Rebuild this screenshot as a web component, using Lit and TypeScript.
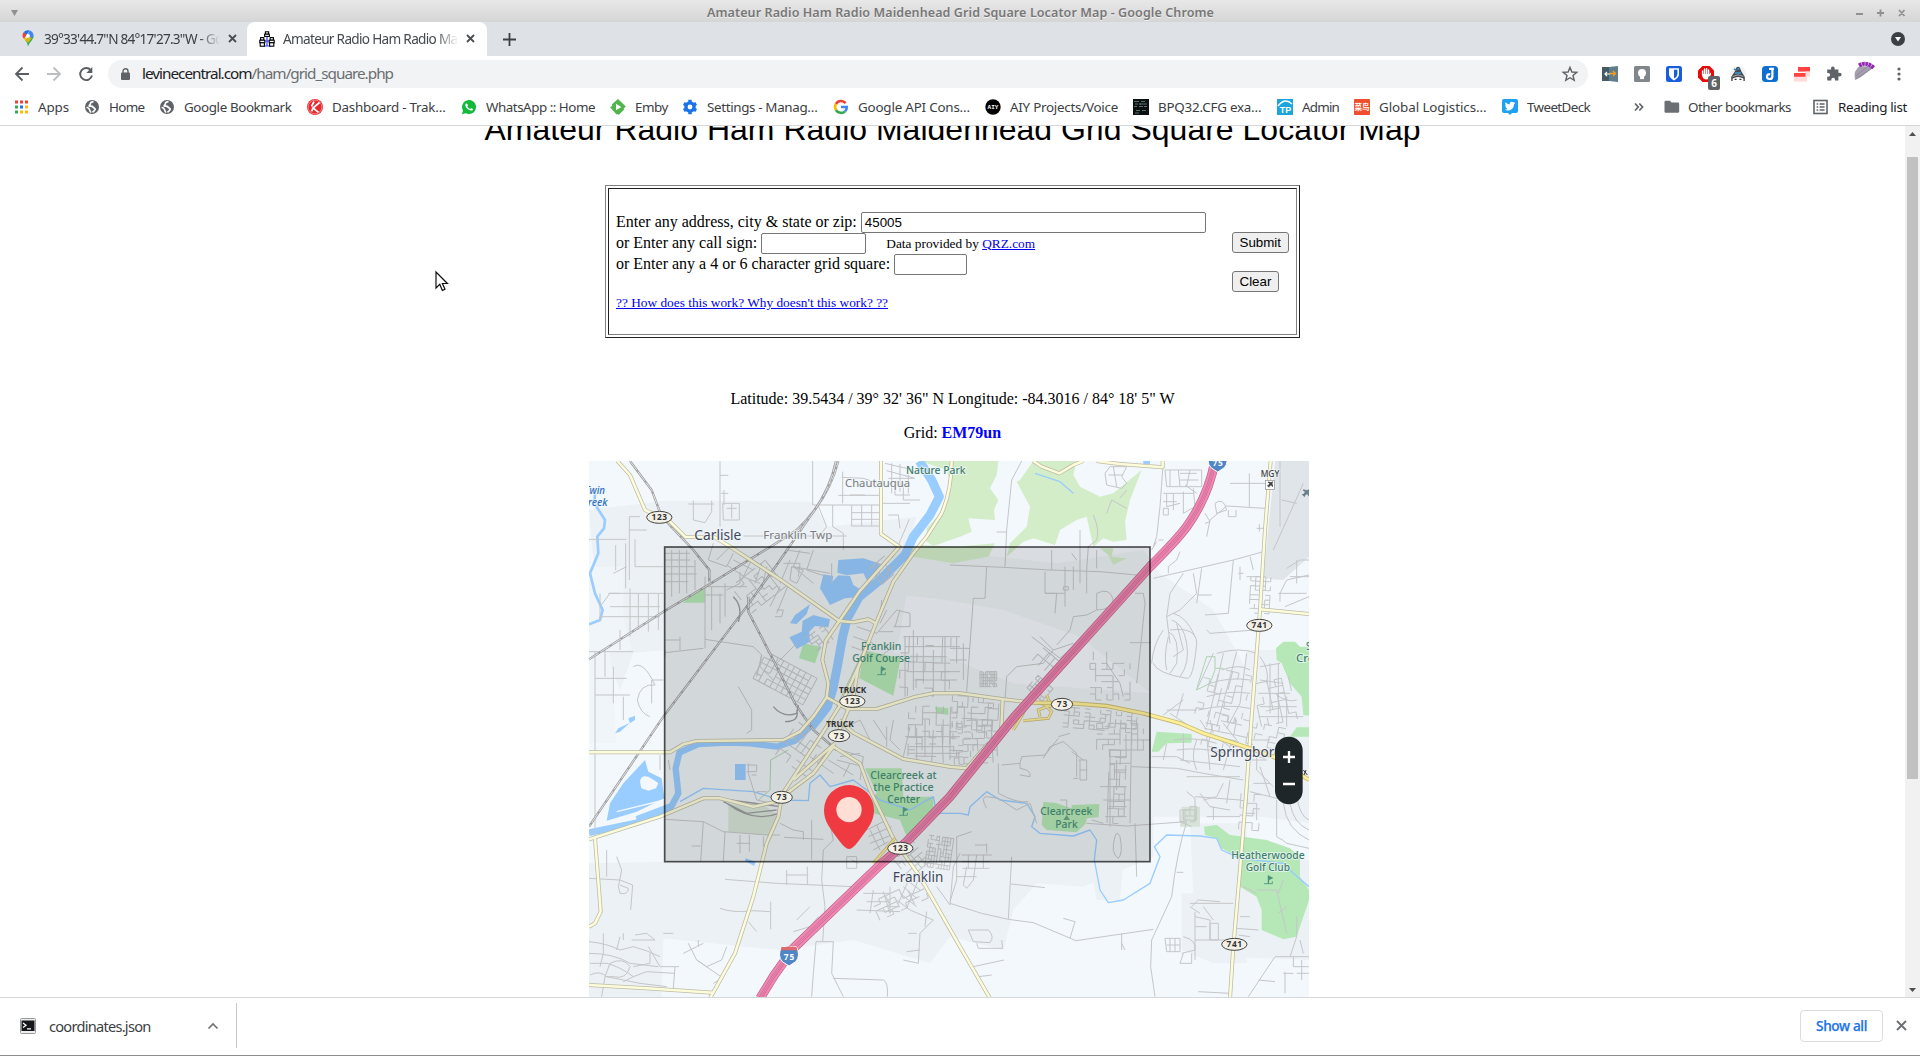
import { LitElement, html, svg, css } from "lit";
import { customElement, property } from "lit/decorators.js";

/** Single-line label that spaces its letters to fill an exact width. */
@customElement("fit-text")
class FitText extends LitElement {
  @property({ type: Number }) w = 0;
  static styles = css`
    :host { display: inline-block; white-space: pre; flex: none; }
    .t { display: inline-block; white-space: pre; }
  `;
  render() { return html`<span class="t"><slot></slot></span>`; }
  firstUpdated() {
    const t = this.renderRoot.querySelector(".t") as HTMLElement;
    const n = (this.textContent || "").length;
    if (this.w && n) {
      const natural = t.getBoundingClientRect().width;
      t.style.letterSpacing = (this.w - natural) / n + "px";
      this.style.width = this.w + "px";
    }
  }
}

const globe = svg`<circle cx="8" cy="8" r="7" fill="#5f6368"/><path d="M9.5 2.6C8 2.8 6.2 3.4 6.4 4.6C6.8 5.8 5 5.6 5.2 7C6.4 7.4 8.4 6.8 9 8C9.6 9.2 11.4 8.8 11.2 10.4C10.6 11.4 9.6 12.6 8.4 13.2M2.6 8.2C4 8.6 5.4 9.4 5.6 10.8C5.8 12 6.6 12.6 6.8 13.6" fill="none" stroke="#fff" stroke-width="1.7"/>`;

const icons: Record<string, unknown> = {
  apps: svg`${[0, 1, 2].map(r => [0, 1, 2].map(c => svg`<rect x=${2 + c * 5} y=${1.5 + r * 5} width="3" height="3" fill=${[["#ea4335", "#ea4335", "#ea4335"], ["#34a853", "#1a73e8", "#fbbc04"], ["#34a853", "#fbbc04", "#fbbc04"]][r][c]}/>`))}`,
  globe,
  dash: svg`<circle cx="8" cy="8" r="8" fill="#e8272c"/><circle cx="8" cy="8" r="6.9" fill="none" stroke="#fff" stroke-width=".6" opacity=".7"/><path d="M7 2.5L4.5 7.5M12.5 3.5L6 9L11.5 13.4M6 9L4.6 12.4" fill="none" stroke="#fff" stroke-width="1.7"/>`,
  wa: svg`<path d="M1 15.2L2 11.6A7 7 0 1 1 4.7 14.2Z" fill="#12b93b"/><path d="M5.2 4.6C6.2 3.8 6.6 5.6 7 6.3C6.8 7 6 7.2 6.5 7.8C7.2 9 8 9.6 9.1 10C9.7 9.6 9.9 8.9 10.5 9.2C12.2 10 12.4 10.2 11.5 11.2C9.5 12.6 4.3 9.2 4.3 6Q4.4 5.1 5.2 4.6Z" fill="#fff"/>`,
  emby: svg`<path d="M8 0L15.8 7.6L13.6 9.8L14.2 10.6L8.6 16L7.6 15L6.6 15.4L.2 8.6L2.4 6.4L1.8 5.6Z" fill="#52b54b"/><path d="M6 4.8L11.3 8L6 11.2Z" fill="#fff"/>`,
  gear: svg`<circle cx="8" cy="8" r="4.1" fill="none" stroke="#1a73e8" stroke-width="3.4"/><path d="M8 .8V3.5M8 12.5V15.2M1.8 4.4L4.1 5.7M11.9 10.3L14.2 11.6M1.8 11.6L4.1 10.3M11.9 5.7L14.2 4.4" stroke="#1a73e8" stroke-width="3.4"/>`,
  google: svg`<path d="M12.6 4.1A6 6 0 0 0 2.9 5" fill="none" stroke="#ea4335" stroke-width="2.6"/><path d="M2.9 5A6 6 0 0 0 2.9 11" fill="none" stroke="#fbbc05" stroke-width="2.6"/><path d="M2.9 11A6 6 0 0 0 12 12.4" fill="none" stroke="#34a853" stroke-width="2.6"/><path d="M12 12.4A6 6 0 0 0 13.8 8H8" fill="none" stroke="#4285f4" stroke-width="2.6"/>`,
  aiy: svg`<circle cx="8" cy="8" r="7.7" fill="#000"/><text x="8" y="10.2" font-size="6" font-weight="700" fill="#fff" text-anchor="middle" font-family="Liberation Mono, monospace">AIY</text>`,
  bpq: svg`<rect width="16" height="16" fill="#0b0f12"/><path d="M1 2.5H6M8 2.5H12M2 5H5M7 5H14M1 7.5H4M6 7.5H10M3 11.5H7M9 11.5H13M2 14H6" stroke="#5c7f6a" stroke-width=".9"/><path d="M6 5H8M11 7.5H14" stroke="#7176a8" stroke-width=".9"/>`,
  tp: svg`<rect width="16" height="16" fill="#1ba5dc"/><path d="M1 7Q8 -2 15 5" stroke="#fff" stroke-width="1.5" fill="none"/><text x="8.4" y="14" font-size="9" font-weight="700" fill="#fff" text-anchor="middle" font-family="Liberation Sans, sans-serif">TP</text>`,
  cn: svg`<rect width="16" height="16" rx="1" fill="#f04f2d"/><text x="8" y="11" font-size="7.5" font-weight="700" fill="#fff" text-anchor="middle" font-family="Noto Sans CJK SC, sans-serif">菜鸟</text>`,
  tweet: svg`<path d="M2 0H14Q16 0 16 2V12Q16 14 14 14H10L8 16L6 14H2Q0 14 0 12V2Q0 0 2 0Z" fill="#1da1f2"/><path d="M13.2 4L12 5.2C12 9 9.2 11.5 5.8 11.5Q4 11.5 2.8 10.6Q4.6 10.7 5.6 9.7Q4 9.4 3.7 8.2H4.5Q3 7.4 3.1 5.7L4 6Q2.7 4.8 3.5 3.2Q5.2 5.3 7.7 5.4Q7.4 2.7 9.9 2.7L11.3 3.3L12.8 2.9L12.2 3.9Z" fill="#fff"/>`,
  folder: svg`<path d="M.5 3Q.5 1.8 1.7 1.8H6L7.6 3.6H14Q15.2 3.6 15.2 4.8V12.6Q15.2 13.8 14 13.8H1.7Q.5 13.8 .5 12.6Z" fill="#6b6f73"/>`,
  list: svg`<rect x="1" y="1.5" width="13" height="13" fill="none" stroke="#5f6368" stroke-width="1.6"/><path d="M3.6 5H5.2M3.6 8H5.2M3.6 11H5.2M6.6 5H11.6M6.6 8H11.6M6.6 11H11.6" stroke="#5f6368" stroke-width="1.4"/>`,
};
const icon = (k: string) => html`<svg class="ic" width="16" height="16" viewBox="0 0 16 16">${icons[k]}</svg>`;

/* icon, label, label width, gap before the next entry's icon */
const bookmarks: [string, string, number, number][] = [
  ["apps", "Apps", 31, 15], ["globe", "Home", 35.5, 14.5], ["globe", "Google Bookmark", 107.5, 15.5],
  ["dash", "Dashboard - Trak…", 113.5, 15.5], ["wa", "WhatsApp :: Home", 109, 15], ["emby", "Emby", 33, 14],
  ["gear", "Settings - Manag…", 110.5, 15.5], ["google", "Google API Cons…", 112, 15], ["aiy", "AIY Projects/Voice", 108, 15],
  ["bpq", "BPQ32.CFG exa…", 103.5, 15.5], ["tp", "Admin", 37, 15], ["cn", "Global Logistics…", 107.5, 15.5], ["tweet", "TweetDeck", 63, 0],
];

const extensions = [
  svg`<rect y="1" width="9" height="14" fill="#455a64"/><path d="M7 1L16 0V16L7 15Z" fill="#607d8b"/><path d="M8 8H3M5 6L3 8L5 10" stroke="#fff" stroke-width="1.2" fill="none"/><path d="M8 7.5H13M11 5L13.5 7.5L11 10" stroke="#ff9a1a" stroke-width="1.4" fill="none"/>`,
  svg`<rect width="16" height="16" rx="1.5" fill="#80868b"/><circle cx="8" cy="7" r="4" fill="#fff"/><rect x="6" y="9.5" width="4" height="3.6" fill="#fff"/>`,
  svg`<rect width="16" height="16" rx="2.5" fill="#175ddc"/><path d="M3 2.2H13V8Q13 12 8 14.4Q3 12 3 8Z" fill="#fff"/><path d="M8 3.8H11.4V8Q11.3 10.8 8 12.6Z" fill="#175ddc"/>`,
  svg`<path d="M4.5 0H11.5L16 4.5V11.5L11.5 16H4.5L0 11.5V4.5Z" fill="#e60b0b"/><path d="M4.6 8.5V5M6.6 8V3M8.6 8V2.8M10.6 8V4" stroke="#fff" stroke-width="1.5" stroke-linecap="round"/><path d="M4 8H11.4L12.8 6.6L13 8Q11.5 13.5 8 13.5Q4 13 4 8Z" fill="#fff"/>`,
  svg`<circle cx="8" cy="8" r="8" fill="#f1f1f1"/><path d="M6.4 1.6Q8 0 9.8 1.6L11.4 5.6L14.8 11V15H1.2V11L4.8 5.6Z" fill="#43494f"/><path d="M4 3L6.5 4.4M5 7H11M7.4 2.4L9.4 3.4" stroke="#4187b5" stroke-width="1.8"/><path d="M2.6 12.4Q8 9.4 13.4 12.4V16H2.6Z" fill="#fff"/><path d="M4.6 13.4H6.6M9.4 13.4H11.4" stroke="#333" stroke-width="1.2"/><path d="M2.6 10.4Q8 7.4 13.4 10.4" stroke="#aaa" fill="none"/>`,
  svg`<rect width="16" height="16" rx="3.5" fill="#0f6fd0"/><path d="M7 2.8H12M10.4 3V10.2Q10.4 13 7.6 13Q4.8 12.8 5 10Q5.4 7.8 8.2 8.4" stroke="#fff" stroke-width="2.2" fill="none"/>`,
  svg`<rect x="4" y="1" width="12" height="4.6" fill="#ff4343"/><rect y="10.4" width="13" height="5.2" fill="#ffdada"/><rect x="11" y="5.6" width="5" height="5" fill="#ffdada"/><rect y="7" width="11.5" height="3.8" fill="#ff4343"/>`,
  svg`<path d="M2 3.5H5.2Q4.6 .4 6.8 .4Q9 .4 8.6 3.5H12.4V7Q15.6 6.4 15.6 8.6Q15.6 11 12.4 10.3V14.6H9Q9.3 11.8 7.2 11.8Q5 11.8 5.4 14.6H1.2V10.6Q4.2 11 4.2 8.8Q4.2 6.6 1.2 7V3.5Z" fill="#5f6368"/>`,
];

/* ---------- map ---------- */
/* Regular block of local streets, thinned with a repeatable sequence. */
function streets(x: number, y: number, w: number, h: number, deg: number, nx: number, ny: number, keep = 0.7) {
  let s = Math.floor(x * 31 + y * 17 + w) | 0;
  const rnd = () => { s = (s * 1103515245 + 12345) & 0x7fffffff; return (s >> 8) / 0x7fffff; };
  let d = "";
  for (let i = 0; i <= nx; i++) for (let j = 0; j < ny; j++)
    if (rnd() < keep) d += `M${(x + (w * i) / nx).toFixed(0)} ${(y + (h * j) / ny).toFixed(0)}v${(h / ny).toFixed(0)}`;
  for (let j = 0; j <= ny; j++) for (let i = 0; i < nx; i++)
    if (rnd() < keep) d += `M${(x + (w * i) / nx).toFixed(0)} ${(y + (h * j) / ny).toFixed(0)}h${(w / nx).toFixed(0)}`;
  return svg`<path d=${d} transform="rotate(${deg} ${x + w / 2} ${y + h / 2})"/>`;
}

const localNW = [
  "M420 33V230M420 76H445M788 65V160M775 136H905M340 152V210L375 218L395 185V152M325 162H402M428 160H478V210H430ZM440 175H470M455 160V205M432 120V165M423 130H445M785 82L850 85L890 98M915 40L1000 60M920 62L1005 85M925 85H1000M935 40V130M960 42V125M985 50V130",
  "M698 33V165H905M715 168L740 230L720 255M758 165V230L790 250V300M815 165V228H905M815 188H905M815 208H905M845 165V228M875 165V228M490 258H800M970 150H1020M970 100V150M988 208L940 320L900 345M925 195H955L960 235",
  "M27 268H140M180 200H148V390M148 240H200M165 268V350H250M100 370L140 350M107 285V360M137 280V415M85 430H120M60 470L90 430H250M60 515V430M90 470H240M150 415V560M175 430V540M205 430V545M235 430V540M60 500H240M27 605H160M45 605V1172M120 540V600M45 685H140M100 650V760M75 600V680M45 735H150M160 650Q190 630 225 705Q180 700 172 750Q180 790 210 800M250 690H215V760M130 740V810",
  "M255 310H330M255 330H330M258 350H345M255 372H350M255 395H325M275 300V440M298 300V430M320 300V430M345 330V420M375 380V595M375 410H500M375 435H430M395 410V540M420 430V520M435 400V500M255 608L370 595M255 570H300M300 600V560M255 600V620M375 568L520 590L545 615L540 650L580 690",
  "M400 280L385 330L440 350L460 310M440 345L500 385L540 400M460 330L520 360M410 330L450 290M520 320L485 390M545 340L525 400M560 350L545 420M600 410L570 470M625 405L590 490M480 365V400L440 420M590 480H610L605 500H585M630 330L600 400M660 300L640 350L700 400M620 300L690 310M700 300L680 360L740 380M640 350L750 370M755 340V400M610 340H660L655 380M635 350L670 360L650 400L630 390Z",
  "M475 710L515 780V840L500 850M545 615L530 680M590 640L650 580M900 620L940 590M830 530L890 550M820 560L880 580M815 590L870 610M905 450L900 500M920 480L900 520M890 550L950 480L990 490V530H940M960 480L945 530M895 545H940M970 560H1140M975 590H1140M975 560V740M1000 540V720M1030 560V700M1060 600V740M1095 560V730M990 620H1100M980 665H1140M1000 690H1130",
];
const localNE = [
  "M215 33L185 90L170 240L165 350M140 246H170M110 350L105 445H70L50 725M0 345L160 352L300 360L450 365L560 375L602 345M305 300V360M285 365V430L320 430L315 490M345 350V470M370 350V420M390 240V400M430 195Q450 240 440 270L415 290L410 360V430M440 300V355M285 430H345M340 410H355V420H340ZM365 310L380 330M60 595H0M20 560V640M0 630H50M40 580V690M440 430Q480 410 490 450Q480 480 440 480ZM440 480L410 495L370 500L360 540L320 585M245 560L330 625L380 580M270 560L310 600L370 580M310 600L280 640L200 650L170 680L165 750M430 605V630M470 605V640L510 700L520 740M555 430H580L585 460L575 560L560 700",
  "M465 70L480 50H530L515 80L530 100L515 115L470 105ZM475 75H520M490 50L500 110M530 175L485 150L470 190M530 120L510 145M640 33L630 170L620 260L610 290M645 60H755V110H650ZM660 60V110M685 60L690 110M720 60L710 108M640 130H730M650 130V170L690 160M670 130V180M700 125V190M730 115L735 170L700 190M640 175H655V195H640ZM640 155H680M690 70H740M690 90H745M705 105L740 130",
  "M840 100H950M898 70V170M945 175L830 168L780 210L770 260M765 190L780 215L765 220M795 160Q820 140 830 180L800 190ZM835 180V200H858V180M920 235H940M928 222V245M940 305L850 330L610 385M850 330L835 490L765 495M755 355L740 460M700 370L660 430L650 500L660 580M730 370L740 430L690 480L650 500M740 435H785M660 540Q740 530 740 580Q730 690 710 685Q620 670 610 640M665 510Q700 520 710 580Q720 640 690 680M655 545Q690 560 680 640L660 670M655 560Q640 620 650 660M680 520L700 600L670 620M670 490Q710 500 735 560M640 540Q610 580 605 640M690 305L680 330L655 350V370M625 270H640M620 275L605 300M540 578H602M780 550L770 540M780 550L915 540",
  "M870 350V390M900 320L910 360M865 370H880M890 380H930M985 430H1070M990 455V430L1010 390L1077 375M1005 470L1077 440M1010 355L1050 330H1077M1020 380H1077M1040 330V400M790 610L740 720M800 610Q870 590 920 610M815 660Q870 640 900 660M780 700Q840 680 900 690M770 740Q840 720 900 730M745 780Q830 760 900 775M820 610L800 700L770 830M860 605L830 720L800 830M890 610L870 760L830 835M930 620Q960 660 950 700M930 650L990 640M930 690L1000 700M925 730L1020 730M960 640V790M985 640V820M700 730L680 800M650 780H740M640 795L700 750M660 790L720 830M930 770H1040M925 800H1060M1010 740V830M975 730Q1010 760 1040 750",
  "M970 300L1060 100M990 33V230M995 150L1040 160",
];
const localSW = [
  "M27 475L120 480L158 495L152 570M80 390V470M110 410L125 450L115 500L120 520Q145 525 145 505L120 495M240 105V150M265 120L270 150M255 298L370 305L430 335L560 345L600 345M370 305L362 425M435 335L430 425M480 345V400M508 345V395M335 378H362M470 370H510M550 350V380M435 478L590 490L820 500M620 450V495M620 465H685M682 440V495M420 565Q460 580 520 572L570 575M572 545V628M505 605L530 635M600 310L640 330L670 335V360M612 352L730 358M695 300V420M730 390L725 480L735 560L728 665H708L700 760L695 830M728 665H760L755 760L790 830M760 775L910 780Q925 785 922 830M640 635L690 620L715 590M650 600L690 560",
  "M27 665Q80 670 120 690L160 680Q200 690 240 710M27 700Q100 700 150 730L235 740M30 730L80 730Q120 740 160 770L200 755L285 760M70 640V700L60 740M120 650L110 690M130 660V640M155 660H225L200 640L165 645M205 680L240 740M75 770L90 730Q130 710 150 740Q140 780 100 770ZM30 765Q60 750 80 770L180 790L260 800M75 770L65 830M210 700V730L160 740M240 740H297M285 740L280 805M130 785L160 770M325 670L350 720L430 775M310 700L350 680L370 670M440 680L425 720L380 740L350 720M425 775L400 790M250 640H280M355 660V680",
  "M505 130V160L530 240M500 135H530V155H500M515 165H530M530 215H560M530 240L575 250",
  "M770 120L850 140M780 90L850 110L840 180M745 120L820 165M880 0L920 60M920 20V80M940 0L930 60L960 90M990 20L970 110M1010 25V120M1035 0V110M1060 30L1055 125M1085 20L1090 128M1110 30V120M975 50H1140M985 80H1120M985 100H1140M800 20L840 0L870 60M780 110L840 100M690 110L760 160M810 130L790 170",
  "M730 390L760 360L750 310M860 330L920 300M865 350L935 320M870 370L935 345M880 390L925 365M870 330L900 390M890 315L915 375M800 410H830V445H800ZM815 420L835 430M920 560H960M880 510L870 580M850 520H930M860 545H930M930 500V580M830 570L960 575M910 515L930 580M990 570L1060 600L1020 640L1015 730L970 720M1040 575L1035 620M1010 640H985M1020 690L980 695M1110 555L1120 440L1140 400M1070 500L1110 555M960 520L1010 560M970 500L1010 535M980 480L1020 510M950 540L990 570M990 470L955 550M1015 480L980 565",
];
const localSE = [
  "M145 130V220Q200 250 235 245M155 135L210 130L215 110L285 105L325 55M210 130V145Q245 150 240 170L210 165M280 115L300 80L340 65L380 100V170M385 120H410V180H390V120M390 150H410M365 95L400 120M370 175H385M325 50L360 40M480 90V320M480 110H530M480 130H540M490 150H530M500 120V210M450 200H530M460 240H540M465 290H530M475 260H530M545 0L540 310M520 60H600M555 310L560 470M410 310L530 318L710 305M495 350Q480 400 505 415Q520 400 510 350Q500 330 495 350M350 300V240H330M425 300L460 310",
  "M110 265Q90 230 110 230L145 235L200 270L240 250L260 310M0 550L95 580L175 598L250 608L378 662L610 628M175 598L185 410M183 492L285 503M20 350V480L0 545M20 350L65 335M35 405H125M35 425H120M38 445H118M55 405V445M80 405L70 480L50 505L40 495L50 440M100 405V445M20 470H80M75 375H110M110 370V400M340 595L375 605L360 655M515 640V690M515 670L525 690M55 630H115Q135 650 120 668L70 665ZM80 670L85 685H158L155 660M70 740L162 720M85 770L125 765",
  "M710 305Q680 400 665 530L605 660L602 740L615 830M680 457H700M545 140L680 145L760 160L880 180M605 110H680L720 130M640 120L650 70M700 40V120M740 60Q720 110 740 150M770 50L780 150M810 60L840 80L820 150M670 60Q740 50 800 70M680 90Q750 80 830 100M690 120L870 140M710 170H870M710 215L735 235V300M735 230L870 240M750 220L780 260L840 270M760 240L800 230L820 190M770 290H870M790 260V300M840 180L830 250M880 250H920V300M880 280H915M720 260H740V300H700V270H720ZM690 305L725 320",
  "M720 550H850M725 560L745 540L810 545M735 575V720M735 590L780 600V660M760 560L790 600M735 620H770M780 610H805V660H780ZM700 650Q740 660 735 690L695 700M645 655H690V695H650ZM660 655V695M675 655V695M650 675H690M700 700L690 730H725V700M870 590H900M860 625L925 630M865 645L900 650M735 660H850M745 815L840 820M720 560L750 580",
  "M920 510H980L1010 640M880 500L920 520M985 520L1000 480M985 580L1010 560M1040 590V650L1020 710M895 830L975 710H1077M925 780L975 785M1005 755V820M1030 710V740H1077M1055 720V780M1040 760H1077M1050 660L1060 700M1000 760H1030M980 240V350Q1000 360 1010 370L1077 385M1000 250Q1010 330 1077 360M1020 250Q1030 310 1077 330M1040 230Q1050 290 1077 300M920 110V150L970 200M930 140L960 230M900 60H960M905 120H950M910 190H960M860 0L850 50M820 10L860 60M780 0L790 40M750 0L770 30M900 215L1000 240",
];

const place = (x: number, y: number, list: string[]) => svg`<g transform="translate(${x} ${y})">${list.map(d => svg`<path d=${d}/>`)}</g>`;

const roads = [
  "M112 33L150 75L195 180L270 215L315 260L405 262L450 290L600 388L778 513",
  "M903 33V252L958 290L838 425L778 513L737 572L727 630L745 700L740 742L803 777",
  "M1115 33Q1115 120 1085 190L1040 260L1000 310L940 395L888 520L840 640L790 750L740 830L605 1035",
  "M778 513L820 517L865 508L888 520",
  "M835 650L820 740L800 790L765 870",
  "M740 742L700 800L660 845L610 870L350 873L310 883L270 907H27",
  "M803 777H890L1000 742L1060 730H1140L1270 748L1360 758",
  "M777 810L820 848L970 927L1110 950L1160 955L1220 885L1263 860L1268 748",
  "M760 890L700 970L605 1042M765 880L640 990",
  "M760 890L840 940L870 1020L940 1165L960 1195L1020 1280L1140 1490L1230 1645",
  "M27 1168L240 1100L370 1045H420L520 1070L605 1052",
  "M45 1165L62 1385L45 1420L27 1430",
  "M27 1605L200 1615L400 1628",
  "M605 1042L595 1100L560 1180L520 1340L465 1510L390 1645",
  "M2072 33L2055 240L2040 480L2015 800L2000 1010L1980 1260L1960 1490L1950 1645",
  "M2040 478L2187 492",
  "M1360 33L1385 50L1438 70L1480 45L1510 33M1550 33L1620 42L1748 52V33",
];
const ramps = "M1415 690L1350 735L1330 790L1300 840M1415 770L1360 755M1330 812L1405 805L1415 785L1400 770L1375 780L1380 800M1400 735L1410 760M945 1165L880 1240";
const route73 = "M1360 758L1480 760L1580 768L1690 790L1800 820L1870 850L2000 892L2080 920L2187 990";
const interstate = "M1905 33Q1885 140 1820 230Q1790 270 1710 350L1620 450L1410 682L1300 805L1110 1040L980 1175L900 1245L640 1495L580 1580L540 1645";
const rails = [
  "M27 628L250 485L385 405L580 285L650 240Q745 150 775 33",
  "M768 33Q750 120 690 200L590 345L500 470L250 800L27 1130",
  "M150 33L215 120L245 200L340 300L388 360V395",
  "M505 440V485L580 630L645 760L700 840L770 900",
];
const thinRails = "M460 440Q490 470 475 515M580 770Q610 805 650 790L655 765M615 815Q660 815 650 780M430 1055L500 1090L590 1080M440 1060Q520 1120 595 1090M450 1050L600 1070";

const greens = [
  "M1020 33L1255 33L1250 75L1230 115L1255 150L1242 180L1245 210L1165 205L1175 245L1140 260L1060 288L1040 275V235L1090 180L1115 110L1100 60Z",
  "M1320 90L1360 33L1490 33L1480 75L1500 110L1560 140L1600 130L1685 60L1650 150L1635 215L1640 270L1600 275L1570 265L1540 290L1520 200L1490 210L1440 240L1425 285L1360 265L1330 275L1280 320L1290 280L1340 230L1350 170L1310 95Z",
  "M1025 285L1130 290L1245 280L1225 320L1170 330L1120 340L1000 320L970 350L1000 290Z",
  "M1560 295H1600L1595 320L1640 325L1600 345L1585 315Z",
];
const parks = [
  "M850 600L962 625L940 737L838 685Z", "M375 410V458H308L340 430Z", "M670 580L722 590L705 640L657 625Z", "M1065 770L1105 775V795L1070 790Z",
  "M855 955H965L970 1040H1060V1080L980 1160L960 1110L880 1090L870 1050L890 1030Z",
  "M1390 1055L1430 1060L1475 1075V1065L1558 1062L1556 1102L1520 1105L1518 1120L1490 1147L1400 1140L1385 1125Z",
  "M1872 1130L1910 1125L1950 1155L2060 1170L2130 1195L2160 1220V1280L2187 1320V1350L2170 1400L2150 1460L2110 1468L2045 1440V1380L2030 1340L1980 1310L1980 1225L1925 1195L1910 1165L1875 1155Z",
  "M2187 797L2170 795L2165 740L2130 700L2105 640L2090 630L2088 595L2110 575H2145L2160 590H2187Z",
  "M1730 845L1835 852V878L1760 880L1735 905H1715Z", "M2187 832H2150L2130 860H2187Z",
];
const ponds = [
  "M775 330L850 325L912 345L890 380L860 390L850 370L800 376L772 368Z", "M730 373L760 378L757 395L775 376L810 378L820 405L845 420L830 442L795 445L750 465L720 415Z",
  "M630 520L645 495L690 463L680 492L650 522Z", "M668 512L700 495L750 508L745 532L705 528L688 545L690 575L650 597L628 562L665 545Z",
  "M80 1112L90 1060L130 1000L195 930L205 965L245 985L253 1045L170 1085Z", "M465 942H497V990H465Z", "M497 1225L527 1235L522 1248L495 1232Z",
  "M145 805L165 797V810L150 820ZM105 850L115 835L150 818L120 845Z", "M1690 33H1710V42H1690Z",
];
const creek = "M300 1055L370 1015L520 1025L600 1050L685 1052L690 1000L720 975L750 1010L820 990L900 1050L990 1080L1060 1040L1070 1090L1140 1090L1165 1095L1170 1070L1220 1025L1260 1050L1340 1060L1365 1100L1355 1130L1380 1150L1480 1158L1530 1140L1550 1170L1543 1230L1560 1320L1585 1358L1630 1350L1710 1300L1740 1220L1723 1190L1760 1155L1860 1158L1910 1165L1925 1200L1980 1225L2110 1240L2140 1270L2187 1310M1365 70L1440 95L1480 130";

function shield(x: number, y: number, t: string) {
  const rx = t.length > 2 ? 38 : 32;
  return svg`<ellipse cx=${x} cy=${y} rx=${rx} ry="18" class="sh"/><text x=${x} y=${y + 9} class="num" text-anchor="middle" textLength=${t.length * 15.5}>${t}</text>`;
}
function interstateShield(x: number, y: number) {
  return svg`<g transform="translate(${x} ${y})"><path d="M-22 -25Q-10 -22 0 -26Q10 -22 22 -25Q36 2 20 20Q8 28 0 33Q-8 28 -20 20Q-36 2 -22 -25Z" fill="#4f86c6" stroke="#fff" stroke-width="3"/><path d="M-22 -25Q-10 -22 0 -26Q10 -22 22 -25L25 -14H-25Z" fill="#dd6a6f"/><text x="0" y="15" text-anchor="middle" textLength="31" class="num w">75</text></g>`;
}
const label = (x1: number, x2: number, y: number, size: number, cls: string, t: string) =>
  svg`<text x=${x1} y=${y} font-size=${size} textLength=${x2 - x1} lengthAdjust="spacingAndGlyphs" class=${cls}>${t}</text>`;
const flag = (x: number, y: number) => svg`<path d="M${x} ${y}V${y - 24}L${x + 13} ${y - 17}L${x + 2} ${y - 12}Z" fill="#4a8f78" stroke="#4a8f78" stroke-width="2"/><path d="M${x - 13} ${y}H${x + 12}V${y - 7}M${x} ${y}V${y - 24}" fill="none" stroke="#4a8f78" stroke-width="2.5"/>`;
const plane = "M12 -13L3 -9L-6 -12L-9 -9L-2 -4L-7 2L-12 3L-3 12L-2 7L4 2L9 9L12 6L9 -3Z";

@customElement("grid-map")
class GridMap extends LitElement {
  static styles = css`
    :host { display: block; width: 720px; height: 536px; }
    .map { display: block; font-family: "Noto Sans", "Open Sans", sans-serif; }
    .local { fill: none; stroke: #c5c6c8; stroke-width: 3; stroke-linejoin: round; }
    .road { fill: none; stroke: #bdbba7; stroke-width: 12; stroke-linejoin: round; }
    .road.top { stroke: #fdfcda; stroke-width: 7.5; }
    .rail { fill: none; stroke: #9d9d9f; stroke-width: 7; }
    .rail.dash { stroke: #eef2f4; stroke-width: 2.5; stroke-dasharray: 34 6; }
    .sh { fill: #f3f1e7; stroke: #45443f; stroke-width: 3; }
    .num { font-size: 25px; font-weight: 700; fill: #333; }
    .num.w { fill: #fff; }
    .halo { stroke: rgba(240, 246, 249, 0.75); stroke-width: 6; paint-order: stroke; stroke-linejoin: round; }
    .city { fill: #44475c; }
    .town { fill: #7b7b7f; }
    .green { fill: #3f7f6b; font-weight: 500; }
    .water { fill: #2f72bd; font-style: italic; font-weight: 500; }
    .truck { fill: #333; font-weight: 700; }
    .dark { fill: #444; font-weight: 500; }
  `;
  render() {
    return html`<svg class="map" width="720" height="536" viewBox="27 33 2160 1608">
      <rect x="27" y="33" width="2160" height="1608" fill="#f3f8fc"/>
      <g fill="#ebf1f4">
        <path d="M27 180L254 152L700 155L740 230L1010 200L980 300L1160 310L1430 340L1690 300L1740 370L1900 480L2000 660H2187V1230L2070 1220L1960 1260L1930 1520L2187 1530V1120L1900 1080H1712V730L1500 560L1270 480L1100 450L830 420L800 600L1100 620L1300 700L1720 730V1220L1510 1310L1370 1300L1300 1380L1270 1500L1110 1460L1050 1540L820 1470L600 1500L250 1465L245 1641H27V1260L254 1235V600L160 610L120 720L60 560Z"/>
        <path d="M254 291H1000L960 560L830 900L1712 900V1060H254Z"/><path d="M254 1235H450V1340L600 1360V1440H27V1240ZM1530 1235H1630L1620 1350H1550ZM1830 1120H2000V1540H1900L1805 1500V1330H1840ZM2000 600H2187V1100H1720V920H1990Z"/>
      </g>
      <path d="M2085 33H2187V320L2110 390L2050 385Z" fill="#e0e5e9"/>
      <path d="M27 350V880H110L90 610L155 600L130 500V350Z" fill="#eff5f9"/>
      ${greens.map(d => svg`<path d=${d} fill="#d3edc9"/>`)}
      ${parks.map(d => svg`<path d=${d} fill="#b5e8b6"/>`)}
      <path d="M445 1062L560 1070L600 1100L570 1157L445 1145ZM1805 1070H1860V1130H1800Z" fill="#d6e3d6"/>
      ${ponds.map(d => svg`<path d=${d} fill="#99ccff"/>`)}
      <path d="M180 995Q182 975 205 980L225 992L235 1000L228 1015L205 1022L184 1015Z" fill="#f3f8fc"/>
      <g fill="none" stroke="#99ccff" stroke-linejoin="round">
        <path stroke-width="27" d="M1018 33L1055 90L1078 140L1050 195L1000 260L975 315L900 390L838 440L802 505L788 560L772 650L758 720L742 770L695 830"/>
        <path stroke-width="19" d="M700 822L645 872L590 890L510 880L440 878L355 882L298 908L287 955L295 1030L275 1068L170 1108"/>
        <path stroke-width="20" d="M275 1070L170 1118L27 1148"/>
        <path stroke-width="8" d="M45 130L43 160L75 210L72 235L52 260L55 310L30 370L45 430L68 480L60 510L27 523"/>
        <path stroke-width="4" d=${creek}/>
      </g>
      <path d="M110 1085L253 1050" stroke="#f3f8fc" stroke-width="4"/>
      <path d="M570 1020L572 930L625 900M770 770L870 560L900 500M1880 620L1855 700L1850 720L1890 700L1905 660L1905 620ZM1905 655H1930M535 1050L570 1020" fill="none" stroke="#afd2b0" stroke-width="3"/>
      <g class="local">
        ${place(0, 0, localNW)}${place(1110, 0, localNE)}${place(0, 810, localSW)}${place(1110, 810, localSE)}
        ${streets(530, 640, 170, 90, 28, 9, 5, 0.95)}
        ${streets(610, 840, 120, 120, 35, 6, 5, 0.6)}
        ${streets(960, 560, 150, 180, 2, 6, 7, 0.4)}
        ${streets(985, 770, 250, 150, 1, 12, 8, 0.45)}
        ${streets(1115, 740, 140, 100, 3, 9, 6, 0.5)}
        ${streets(1200, 665, 50, 45, 0, 9, 5, 0.95)}
        ${streets(1350, 690, 60, 50, 42, 6, 4, 0.7)}
        ${streets(1365, 610, 70, 50, 40, 3, 2, 0.7)}
        ${streets(1450, 780, 220, 60, 5, 14, 5, 0.55)}
        ${streets(1530, 640, 120, 110, 0, 7, 6, 0.5)}
        ${streets(1550, 820, 140, 80, 0, 8, 5, 0.55)}
        ${streets(1585, 900, 50, 220, 2, 3, 10, 0.6)}
        ${streets(1120, 810, 130, 130, -3, 9, 7, 0.45)}
        ${streets(1040, 1160, 75, 95, 8, 9, 8, 0.8)}
        ${streets(950, 1180, 80, 90, -40, 5, 5, 0.65)}
        ${streets(880, 1320, 160, 60, -25, 7, 4, 0.5)}
        ${streets(2010, 380, 60, 110, 3, 4, 8, 0.6)}
        ${streets(1870, 810, 240, 100, 12, 11, 6, 0.4)}
        ${streets(1860, 660, 140, 150, 14, 7, 8, 0.4)}
        ${streets(2030, 690, 110, 130, -12, 5, 6, 0.45)}
        ${streets(1800, 1080, 45, 35, 0, 3, 2, 0.9)}
        ${streets(1980, 1010, 60, 130, 4, 3, 6, 0.5)}
        ${streets(470, 360, 130, 100, -38, 7, 6, 0.45)}
        ${streets(690, 540, 60, 50, -35, 4, 4, 0.6)}
        ${streets(880, 330, 60, 60, -40, 4, 3, 0.5)}
        ${streets(810, 110, 180, 50, 0, 4, 2, 0.3)}
      </g>
      ${rails.map(d => svg`<path d=${d} class="rail"/><path d=${d} class="rail dash"/>`)}
      <path d=${thinRails} fill="none" stroke="#9d9d9f" stroke-width="4"/>
      ${roads.map(d => svg`<path d=${d} class="road"/>`)}
      ${roads.map(d => svg`<path d=${d} class="road top"/>`)}
      <path d=${ramps} fill="none" stroke="#c9b878" stroke-width="9"/><path d=${ramps} fill="none" stroke="#fbec9c" stroke-width="5"/>
      <path d=${route73} fill="none" stroke="#cbb970" stroke-width="13"/><path d=${route73} fill="none" stroke="#fdf09b" stroke-width="8"/>
      <g fill="none"><path d=${interstate} stroke="#c2608d" stroke-width="28"/><path d=${interstate} stroke="#ee8ab2" stroke-width="24"/>
        <path d=${interstate} stroke="#cf6596" stroke-width="11"/><path d=${interstate} stroke="#ee8ab2" stroke-width="7"/><path d=${interstate} stroke="#cf6596" stroke-width="2"/></g>
      <rect x="254" y="291" width="1456" height="944" fill="rgba(0,0,0,.105)" stroke="rgba(0,0,0,.68)" stroke-width="5"/>
      ${label(978, 1157, 72, 31, "green halo", "Nature Park")}
      ${label(795, 990, 111, 35, "town halo", "Chautauqua")}
      ${label(343, 484, 270, 41, "city halo", "Carlisle")}
      ${label(550, 757, 267, 34, "town halo", "Franklin Twp")}
      ${label(14, 75, 131, 32, "water halo", "Twin")}
      ${label(5, 83, 167, 32, "water halo", "Creek")}
      ${label(843, 964, 600, 33, "green", "Franklin")}
      ${label(817, 990, 636, 33, "green", "Golf Course")}${flag(904, 674)}
      ${label(777, 859, 728, 25, "truck", "TRUCK")}
      ${label(739, 821, 830, 25, "truck", "TRUCK")}
      ${label(2042, 2098, 80, 27, "dark halo", "MGY")}
      <rect x="2056" y="91" width="27" height="27" fill="#fff" stroke="#8a8a8a" stroke-width="2"/><path d=${plane} transform="translate(2070 104) scale(.8)" fill="#444"/>
      <path d=${plane} transform="translate(2177 130)" fill="#6b7f8c"/>
      ${label(2178, 2300, 600, 33, "green halo", "Sycamore")}${label(2148, 2242, 636, 33, "green halo", "Creek")}
      ${label(871, 1070, 986, 33, "green", "Clearcreek at")}
      ${label(880, 1061, 1022, 33, "green", "the Practice")}
      ${label(922, 1020, 1059, 33, "green", "Center")}${flag(970, 1096)}
      ${label(938, 1090, 1297, 41, "city halo", "Franklin")}
      ${label(1381, 1537, 1094, 33, "green", "Clearcreek")}
      ${label(1426, 1493, 1133, 33, "green", "Park")}<path d="M1460 1095L1470 1110H1450Z" fill="#5d9576"/>
      ${label(1891, 2107, 921, 41, "city halo", "Springboro")}
      ${label(1954, 2174, 1227, 33, "green halo", "Heatherwoode")}
      ${label(1997, 2130, 1263, 33, "green halo", "Golf Club")}${flag(2065, 1301)}
      ${shield(238, 202, "123")}${shield(817, 754, "123")}${shield(777, 857, "73")}${shield(2038, 526, "741")}${shield(1446, 763, "73")}
      ${shield(605, 1042, "73")}${shield(1071 - 110, 1195, "123")}${shield(1963, 1483, "741")}
      ${interstateShield(627, 1515)}${interstateShield(1913, 33)}
      <path d="M807 1197Q795 1195 780 1175C750 1135 732 1115 732 1080A75 75 0 0 1 882 1080C882 1115 864 1135 834 1175Q819 1195 807 1197Z" fill="#ef3a42"/>
      <circle cx="807" cy="1079" r="38" fill="#ffdfd5"/>
      <path d="M2170 960L2182 975M2172 975L2178 960" stroke="#333" stroke-width="3"/>
      <rect x="2085" y="860" width="83" height="203" rx="41" fill="#1f2629"/>
      <path d="M2109 921H2145M2127 903V939M2109 1002H2145" stroke="#fff" stroke-width="7"/>
    </svg>`;
  }
}

@customElement("app-root")
class AppRoot extends LitElement {
  static styles = css`
    :host { display: flex; flex-direction: column; width: 1920px; height: 1056px; overflow: hidden; background: #fff; position: relative;
      font-family: "Noto Sans", "Open Sans", sans-serif; color: #3c4043; box-sizing: border-box; }
    * { box-sizing: border-box; }
    svg { flex: none; display: block; overflow: visible; }
    .title { height: 22px; flex: none; display: flex; align-items: center; background: linear-gradient(#e8e8e8, #d5d5d5); font-size: 12.5px; font-weight: 600; color: #777; text-shadow: 0 1px 0 #f2f2f2; padding: 4px 14px 0 11px; line-height: 18px; }
    .title .name { margin-left: 689px; }
    .wbtns { margin-left: auto; margin-top: -1px; }
    .strip { height: 34px; flex: none; display: flex; background: #dee1e6; font-size: 13.6px; }
    .tab { display: flex; align-items: center; height: 34px; padding-bottom: 1px; }
    .tab.off { width: 247px; padding-left: 20px; }
    .tab.on { width: 240px; padding-left: 12px; background: #fff; border-radius: 8px 8px 0 0; color: #45494d; }
    .tabname { overflow: hidden; margin-left: 8px; -webkit-mask-image: linear-gradient(90deg, #000 88%, transparent); mask-image: linear-gradient(90deg, #000 88%, transparent); height: 20px; line-height: 19px; flex: none; }
    .off .tabname { width: 176px; margin-left: 8px; }
    .on .tabname { width: 175px; }
    .x { margin-left: 7.5px; }
    .plus { margin: 11px 0 0 16px; }
    .down { margin: 10px 15px 0 auto; }
    .bar { height: 36px; flex: none; display: flex; align-items: center; }
    .nav { display: flex; gap: 17.5px; padding-left: 14px; width: 108px; flex: none; }
    .omni { width: 1480px; height: 28px; border-radius: 14px; background: #f1f3f4; display: flex; align-items: center; padding: 0 10px 0 13px; font-size: 15.3px; color: #6a6e72; }
    .omni b { font-weight: 400; color: #202124; }
    .omni fit-text { margin-left: 12px; line-height: 24px; padding-bottom: 2px; }
    .star { margin-left: auto; }
    .exts { display: flex; gap: 16px; padding-left: 14px; align-items: center; }
    .slot { position: relative; width: 16px; height: 16px; }
    .badge { position: absolute; left: 10px; top: 10px; width: 12px; height: 14px; border-radius: 2px; background: #5f6368; color: #fff; font: 700 10px/14px "Noto Sans", sans-serif; text-align: center; }
    .marks { height: 34px; flex: none; display: flex; align-items: center; padding: 0 14px 4px 13px; border-bottom: 1px solid #d6d8db; font-size: 13.4px; line-height: 20px; white-space: nowrap; }
    .mark { display: flex; align-items: center; gap: 9px; flex: none; }
    .more { margin-left: 44px; }
    .sep { width: 1px; height: 16px; background: #c9ccd0; }
    .view { height: 871px; flex: none; display: flex; overflow: hidden; }
    .page { width: 1905px; display: flex; flex-direction: column; align-items: center; font: 16px/18px "Liberation Serif", serif; color: #000; }
    .h1 { font: 32px/37px "Liberation Sans", sans-serif; height: 37px; margin-top: -15px; flex: none; }
    .form { width: 695px; height: 153px; margin-top: 37px; flex: none; border: 1px solid; border-color: #808080 #222 #222 #808080; padding: 2px; }
    .cell { height: 147px; border: 1px solid; border-color: #222 #808080 #808080 #222; padding: 23px 7px 0; display: flex; }
    .left { width: 616px; }
    .row { display: flex; height: 21px; align-items: center; white-space: pre; }
    .row > span { padding-bottom: 2px; }
    .row > .small { padding-bottom: 0; }
    .in { height: 21px; border: 1px solid #767676; border-radius: 2px; margin-left: 4px; font: 13.33px/19px "Liberation Sans", sans-serif; padding-left: 3px; background: #fff; }
    .small { font-size: 13.33px; }
    a { color: #0000ee; text-decoration: underline; }
    .help { margin-top: 19px; height: 20px; }
    .right { display: flex; flex-direction: column; align-items: flex-start; gap: 18px; padding-top: 20px; }
    .btn { height: 21px; border: 1px solid #767676; border-radius: 3px; background: #efefef; font: 13.33px/19px "Liberation Sans", sans-serif; padding: 0 7px; }
    .coords { margin-top: 52px; height: 18px; }
    .grid { margin-top: 16px; height: 18px; }
    .grid b { color: #0000ff; }
    grid-map { margin: 19px 7px 0 0; flex: none; }
    .scroll { width: 15px; background: #f1f1f1; display: flex; flex-direction: column; align-items: center; padding: 6px 0 5px; }
    .thumb { width: 11px; height: 622px; background: #c1c1c1; margin-top: 21px; }
    .scroll .dn { margin-top: auto; }
    .shelf { height: 59px; flex: none; border-top: 1px solid #d6d8db; border-bottom: 1px solid #8d8d8d; display: flex; align-items: center; padding: 0 13px 2px 20px; }
    .file { font-size: 14.6px; margin-left: 13px; line-height: 20px; }
    .up { margin-left: 57px; }
    .vr { width: 1px; height: 45px; background: #c6c8ca; margin-left: 18px; }
    .all { margin-left: auto; width: 83px; height: 32px; border: 1px solid #dadce0; border-radius: 4px; color: #1a73e8; font-size: 13.6px; font-weight: 500; display: flex; align-items: center; justify-content: center; padding-bottom: 1px; -webkit-text-stroke: 0.25px #1a73e8; }
    .close { margin-left: 13px; }
    .pointer { position: absolute; left: 435px; top: 271px; }
  `;
  render() {
    return html`
      <div class="title">
        <svg width="7" height="6"><path d="M0 0H7L3.5 6Z" fill="#909090"/></svg>
        <fit-text class="name" w="507">Amateur Radio Ham Radio Maidenhead Grid Square Locator Map - Google Chrome</fit-text>
        <svg class="wbtns" width="50" height="8"><path d="M0 5H7M21 4H28M24.5 .5V7.5M43 1L48.5 7M48.5 1L43 7" stroke="#909090" stroke-width="1.8"/></svg>
      </div>
      <div class="strip">
        <div class="tab off">
          <svg width="16" height="17" viewBox="0 0 16 17"><path d="M8 16.5Q7.5 12.6 5 10L11 5L13.6 6Q13.6 8.5 11.5 10.8Q9 13.5 8 16.5Z" fill="#34a853"/><path d="M2.5 6L6 8L5.2 10.4Q2.8 8.4 2.5 6Z" fill="#fbbc04"/><path d="M5 10.2L10.5 4L12 8L8 13Z" fill="#fbbc04" opacity=".8"/><path d="M2.5 6Q2.4 3.6 3.8 2L7 4.6L4 8.6Q2.6 7.4 2.5 6Z" fill="#ea4335"/><path d="M3.8 2Q6.4 -.6 9.8 .6L6.4 5Z" fill="#1a73e8"/><path d="M9.8 .6Q13.4 2 13.6 6L11.4 8.6L8 4Z" fill="#4285f4"/><circle cx="8" cy="5.8" r="1.9" fill="#fff"/></svg>
          <div class="tabname"><fit-text w="186">39°33'44.7"N 84°17'27.3"W - Goo</fit-text></div>
          <svg class="x" width="9" height="9"><path d="M1 1L8 8M8 1L1 8" stroke="#4a4d51" stroke-width="1.8"/></svg>
        </div>
        <div class="tab on">
          <svg width="16" height="16" viewBox="0 0 16 16"><path d="M8 5V15M4 10H12M4 15H12" stroke="#3344ff" stroke-width="1.2"/><g fill="#fff" stroke="#000" stroke-width="1.1"><rect x="6.4" y=".8" width="3.2" height="2.4"/><rect x="5.6" y="3.2" width="4.8" height="2.2"/><rect x="1.6" y="6.6" width="3.2" height="2.6"/><rect x="11.2" y="6.6" width="3.2" height="2.6"/><rect x=".8" y="9.2" width="5" height="2.6"/><rect x="10.2" y="9.2" width="5" height="2.6"/><rect x="1.2" y="11.8" width="4.2" height="3.4"/><rect x="10.6" y="11.8" width="4.2" height="3.4"/></g></svg>
          <div class="tabname"><fit-text w="185">Amateur Radio Ham Radio Maid</fit-text></div>
          <svg class="x" width="9" height="9"><path d="M1 1L8 8M8 1L1 8" stroke="#4a4d51" stroke-width="1.8"/></svg>
        </div>
        <svg class="plus" width="13" height="13"><path d="M0 6.5H13M6.5 0V13" stroke="#3c4043" stroke-width="1.8"/></svg>
        <svg class="down" width="14" height="14"><circle cx="7" cy="7" r="7" fill="#3c4043"/><path d="M4 5H10L7 9.4Z" fill="#fff"/></svg>
      </div>
      <div class="bar">
        <div class="nav">
          <svg width="15" height="16"><path d="M15 8H2M8.5 1.5L2 8L8.5 14.5" fill="none" stroke="#5a5e63" stroke-width="1.8"/></svg>
          <svg width="14" height="16"><path d="M0 8H13M6.5 1.5L13 8L6.5 14.5" fill="none" stroke="#bcbec1" stroke-width="1.8"/></svg>
          <svg width="16" height="16"><path d="M12.8 4.2A6 6 0 1 0 14 9.6" fill="none" stroke="#5a5e63" stroke-width="1.9"/><path d="M14.3 1V7H8.3Z" fill="#5a5e63"/></svg>
        </div>
        <div class="omni">
          <svg width="9" height="12"><rect y="4.5" width="9" height="7.5" rx="1" fill="#5f6368"/><path d="M2 5V3.2A2.5 2.5 0 0 1 7 3.2V5" fill="none" stroke="#5f6368" stroke-width="1.4"/></svg>
          <fit-text w="251"><b>levinecentral.com</b>/ham/grid_square.php</fit-text>
          <svg class="star" width="16" height="16"><path d="M8 1.4L9.9 6L14.8 6.3L11 9.5L12.2 14.3L8 11.7L3.8 14.3L5 9.5L1.2 6.3L6.1 6Z" fill="none" stroke="#5f6368" stroke-width="1.4"/></svg>
        </div>
        <div class="exts">
          ${extensions.map((e, i) => html`<div class="slot"><svg width="16" height="16">${e}</svg>${i === 3 ? html`<span class="badge">6</span>` : ""}</div>`)}
          <div class="slot"><svg width="16" height="16"><path d="M-3 14Q-5 4 2 0L16 1L3 11Z" fill="#a59fae"/><path d="M-2 10L10 0M-2 13L14 2" stroke="#8d8699"/><path d="M1 -.5Q8 -5 16 2" fill="none" stroke="#9328b4" stroke-width="4" stroke-dasharray="2.8 .5"/></svg></div>
          <div class="slot"><svg width="16" height="16"><g fill="#5f6368"><circle cx="9" cy="3" r="1.6"/><circle cx="9" cy="8" r="1.6"/><circle cx="9" cy="13" r="1.6"/></g></svg></div>
        </div>
      </div>
      <div class="marks">
        ${bookmarks.map(([k, t, w, g]) => html`<div class="mark" style="margin-right:${g}px">${icon(k)}<fit-text w=${w}>${t}</fit-text></div>`)}
        <svg class="more" width="10" height="8"><path d="M1 .5L4.3 4L1 7.5M5.3 .5L8.6 4L5.3 7.5" fill="none" stroke="#5f6368" stroke-width="1.7"/></svg>
        <div class="sep" style="margin:0 10px 0 10px"></div>
        <div class="mark" style="gap:8px">${icon("folder")}<fit-text w="103">Other bookmarks</fit-text></div>
        <div class="sep" style="margin:0 11px"></div>
        <div class="mark" style="color:#202124">${icon("list")}<fit-text w="69">Reading list</fit-text></div>
      </div>
      <div class="view">
        <div class="page">
          <fit-text class="h1" w="936">Amateur Radio Ham Radio Maidenhead Grid Square Locator Map</fit-text>
          <div class="form"><div class="cell">
            <div class="left">
              <div class="row"><span>Enter any address, city &amp; state or zip:</span><div class="in" style="width:345px">45005</div></div>
              <div class="row"><span>or Enter any call sign:</span><div class="in" style="width:105px"></div><span class="small" style="margin-left:20px">Data provided by <a>QRZ.com</a></span></div>
              <div class="row"><span>or Enter any a 4 or 6 character grid square:</span><div class="in" style="width:73px"></div></div>
              <div class="help small"><a>?? How does this work? Why doesn't this work? ??</a></div>
            </div>
            <div class="right"><div class="btn">Submit</div><div class="btn">Clear</div></div>
          </div></div>
          <div class="coords">Latitude: 39.5434 / 39° 32' 36" N Longitude: -84.3016 / 84° 18' 5" W</div>
          <div class="grid">Grid: <b>EM79un</b></div>
          <grid-map></grid-map>
        </div>
        <div class="scroll">
          <svg width="7" height="4"><path d="M0 4L3.5 0L7 4Z" fill="#505050"/></svg>
          <div class="thumb"></div>
          <svg class="dn" width="7" height="4"><path d="M0 0H7L3.5 4Z" fill="#505050"/></svg>
        </div>
      </div>
      <div class="shelf">
        <svg width="16" height="16"><rect x=".5" y=".5" width="15" height="15" rx="1" fill="#eee" stroke="#999"/><rect x="1.5" y="2.5" width="13" height="10.5" fill="#15171a"/><path d="M3 5L6 7.2L3 9.4M7 10.8H11" stroke="#fff" stroke-width="1.3" fill="none"/></svg>
        <fit-text class="file" w="101.5">coordinates.json</fit-text>
        <svg class="up" width="10" height="6"><path d="M.5 5.5L5 1L9.5 5.5" fill="none" stroke="#6d7073" stroke-width="1.6"/></svg>
        <div class="vr"></div>
        <div class="all"><fit-text w="51">Show all</fit-text></div>
        <svg class="close" width="11" height="11"><path d="M1 1L10 10M10 1L1 10" stroke="#6d7073" stroke-width="1.9"/></svg>
      </div>
      <svg class="pointer" width="13" height="21"><path d="M1 1V17L4.8 13.4L7.4 19.4L10 18.2L7.4 12.5H12.4Z" fill="#fff" stroke="#111" stroke-width="1.2"/></svg>
    `;
  }
}
